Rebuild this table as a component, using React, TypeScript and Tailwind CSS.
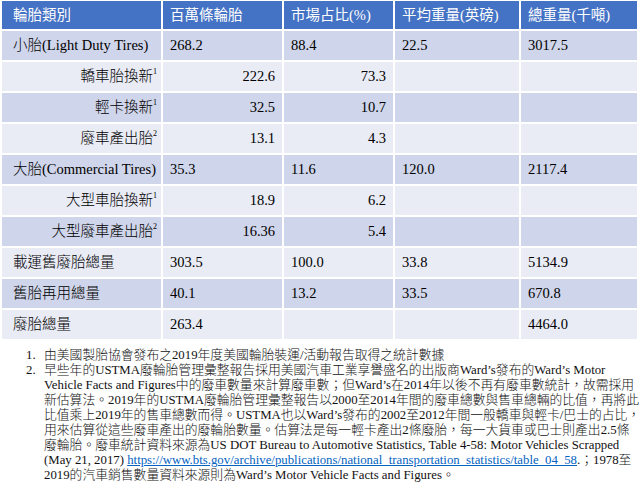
import React from "react";

const FONT = { fontFamily: '"Liberation Serif", "Noto Sans CJK TC", serif' };

type Cell = { t: React.ReactNode; r?: boolean };
type Row = Cell[];

const S1 = () => <sup className="text-[8px] relative top-[-1px] align-super">1</sup>;
const S2 = () => <sup className="text-[8px] relative top-[-1px] align-super">2</sup>;

const rows: Row[] = [
  [{ t: "小胎(Light Duty Tires)" }, { t: "268.2" }, { t: "88.4" }, { t: "22.5" }, { t: "3017.5" }],
  [{ t: <>轎車胎換新<S1 /></>, r: true }, { t: "222.6", r: true }, { t: "73.3", r: true }, { t: "" }, { t: "" }],
  [{ t: <>輕卡換新<S1 /></>, r: true }, { t: "32.5", r: true }, { t: "10.7", r: true }, { t: "" }, { t: "" }],
  [{ t: <>廢車產出胎<S2 /></>, r: true }, { t: "13.1", r: true }, { t: "4.3", r: true }, { t: "" }, { t: "" }],
  [{ t: "大胎(Commercial Tires)" }, { t: "35.3" }, { t: "11.6" }, { t: "120.0" }, { t: "2117.4" }],
  [{ t: <>大型車胎換新<S1 /></>, r: true }, { t: "18.9", r: true }, { t: "6.2", r: true }, { t: "" }, { t: "" }],
  [{ t: <>大型廢車產出胎<S2 /></>, r: true }, { t: "16.36", r: true }, { t: "5.4", r: true }, { t: "" }, { t: "" }],
  [{ t: "載運舊廢胎總量" }, { t: "303.5" }, { t: "100.0" }, { t: "33.8" }, { t: "5134.9" }],
  [{ t: "舊胎再用總量" }, { t: "40.1" }, { t: "13.2" }, { t: "33.5" }, { t: "670.8" }],
  [{ t: "廢胎總量" }, { t: "263.4" }, { t: "" }, { t: "" }, { t: "4464.0" }],
];

const headers = ["輪胎類別", "百萬條輪胎", "市場占比(%)", "平均重量(英磅)", "總重量(千噸)"];

export default function App() {
  return (
    <div className="w-[640px] h-[488px] bg-white text-black overflow-hidden" style={FONT}>
      <div className="pl-[2px] pt-[1px]">
        <div className="grid grid-cols-[159px_119px_109px_124px_116px] gap-[2px] bg-white text-[14.5px] leading-none">
          {headers.map((h, i) => (
            <div
              key={h}
              className={`h-[28px] bg-[#4472C4] text-white flex items-center ${i === 0 ? "pl-[11px]" : "pl-[7px]"}`}
            >
              {h}
            </div>
          ))}
          {rows.map((row, ri) =>
            row.map((c, ci) => (
              <div
                key={`${ri}-${ci}`}
                className={`h-[29px] flex items-center font-light ${ri % 2 === 0 ? "bg-[#CFD5EA]" : "bg-[#E9EBF5]"} ${
                  c.r ? (ci === 0 ? "justify-end pr-[4px]" : "justify-end pr-[7px]") : ci === 0 ? "pl-[11px]" : "pl-[7px]"
                }`}
              >
                <span>{c.t}</span>
              </div>
            ))
          )}
        </div>
      </div>
      <div className="mt-[9px] text-[12.8px] leading-[15px] text-[#111] font-light">
        <div className="flex">
          <div className="w-[44px] pl-[26px] shrink-0">1.</div>
          <div>由美國製胎協會發布之2019年度美國輪胎裝運/活動報告取得之統計數據</div>
        </div>
        <div className="flex">
          <div className="w-[44px] pl-[26px] shrink-0">2.</div>
          <div className="flex flex-col whitespace-nowrap">
            <div>早些年的USTMA廢輪胎管理彙整報告採用美國汽車工業享譽盛名的出版商Ward’s發布的Ward’s Motor</div>
            <div>Vehicle Facts and Figures中的廢車數量來計算廢車數；但Ward’s在2014年以後不再有廢車數統計，故需採用</div>
            <div>新估算法。2019年的USTMA廢輪胎管理彙整報告以2000至2014年間的廢車總數與售車總輛的比值，再將此</div>
            <div>比值乘上2019年的售車總數而得。USTMA也以Ward’s發布的2002至2012年間一般轎車與輕卡/巴士的占比，</div>
            <div>用來估算從這些廢車產出的廢輪胎數量。估算法是每一輕卡產出2條廢胎，每一大貨車或巴士則產出2.5條</div>
            <div>廢輪胎。廢車統計資料來源為US DOT Bureau to Automotive Statistics, Table 4-58: Motor Vehicles Scrapped</div>
            <div>
              (May 21, 2017){" "}
              <span className="text-[#0563C1] underline">
                https://www.bts.gov/archive/publications/national_transportation_statistics/table_04_58
              </span>
              .；1978至
            </div>
            <div>2019的汽車銷售數量資料來源則為Ward’s Motor Vehicle Facts and Figures。</div>
          </div>
        </div>
      </div>
    </div>
  );
}
